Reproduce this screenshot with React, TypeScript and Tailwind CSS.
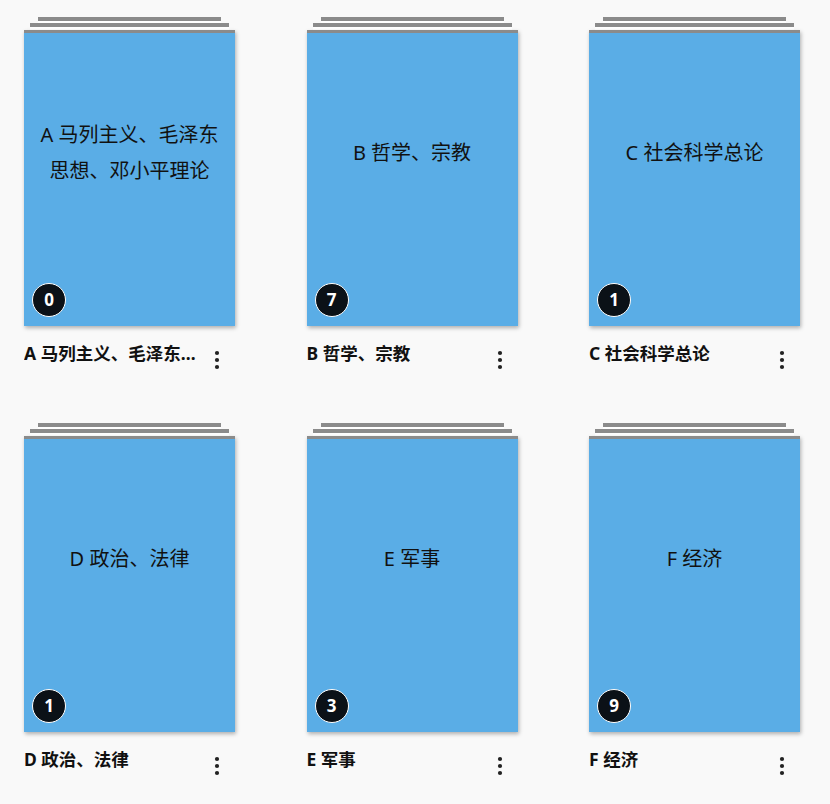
import { FC } from 'react'

interface ICategory {
  name: string
  count: number
}

const categories: ICategory[] = [
  { name: 'A 马列主义、毛泽东思想、邓小平理论', count: 0 },
  { name: 'B 哲学、宗教', count: 7 },
  { name: 'C 社会科学总论', count: 1 },
  { name: 'D 政治、法律', count: 1 },
  { name: 'E 军事', count: 3 },
  { name: 'F 经济', count: 9 },
]

const MoreIcon: FC = () => (
  <svg width="20" height="20" viewBox="0 0 20 20" className="text-[#222]">
    <circle cx="10" cy="3" r="2.1" fill="currentColor" />
    <circle cx="10" cy="10" r="2.1" fill="currentColor" />
    <circle cx="10" cy="17" r="2.1" fill="currentColor" />
  </svg>
)

const BookStack: FC<{ category: ICategory }> = ({ category }) => (
  <div className="flex flex-col w-[211px]">
    <div className="mx-[14px] h-[6px] border-t-4 border-[#8b8b8b] bg-white" />
    <div className="mx-[6px] h-[7px] border-t-4 border-[#8b8b8b] bg-white" />
    <div className="relative h-[296px] border-t-[3px] border-[#8b8b8b] bg-[#5aade6] shadow-[1px_2px_4px_rgba(0,0,0,0.3)]">
      <div className="flex h-[240px] items-center justify-center px-4 text-center text-[20px] leading-[36px] text-[#111]">
        {category.name}
      </div>
      <div className="absolute left-[8px] bottom-[9px] flex h-[34px] w-[34px] items-center justify-center rounded-full border-[1.5px] border-white bg-[#0b1117] text-[17px] font-bold text-white">
        {category.count}
      </div>
    </div>
    <div className="mt-[15px] flex justify-between">
      <p className="w-[180px] truncate text-[17.5px] font-bold leading-[24px] text-[#111]">
        {category.name}
      </p>
      <div className="mt-[9px] mr-[8px]">
        <MoreIcon />
      </div>
    </div>
  </div>
)

export default function App() {
  return (
    <div
      className="min-h-screen bg-[#f9f9f9] pl-[24px] pt-[17px]"
      style={{ fontFamily: '"Noto Sans", "Noto Sans CJK SC", sans-serif' }}
    >
      <div className="grid grid-cols-[211px_211px_211px] gap-x-[71.5px] gap-y-[53px]">
        {categories.map((category, index) => (
          <BookStack key={index} category={category} />
        ))}
      </div>
    </div>
  )
}
